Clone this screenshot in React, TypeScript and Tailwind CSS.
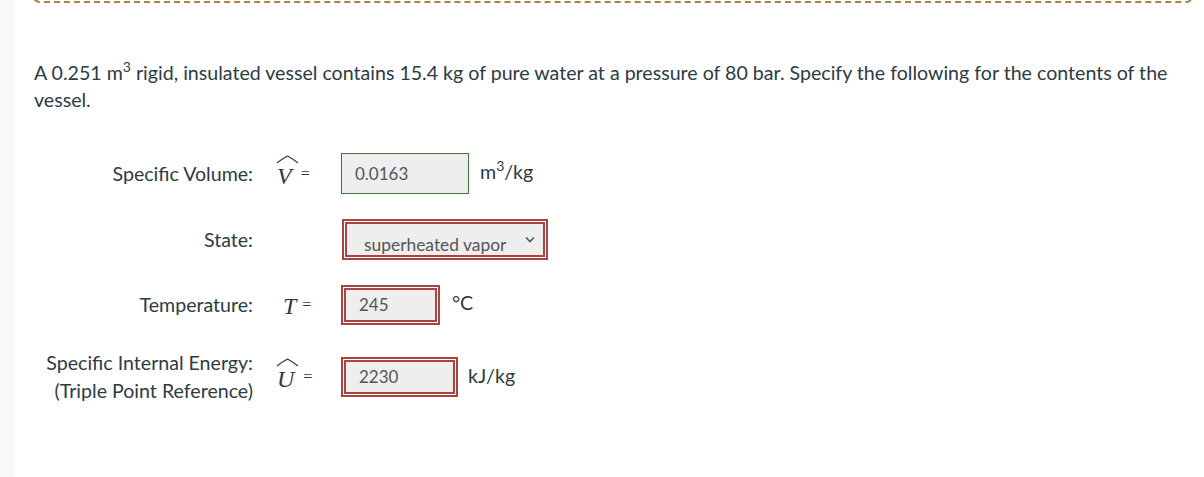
import React from "react";

const font = { fontFamily: "Lato, 'Open Sans', sans-serif" };
const serif = { fontFamily: "'Liberation Serif', 'DejaVu Serif', serif" };

function Hat({ letter }: { letter: string }) {
  return (
    <span className="relative inline-block translate-y-[2px]" style={serif}>
      <svg className="absolute left-[-1px] top-[-3px]" width="23" height="9" viewBox="0 0 23 9">
        <path d="M1 8 Q6 4 11.5 1 Q17 4 22 8" fill="none" stroke="#2d3b45" strokeWidth="1.2" />
      </svg>
      <span className="italic">{letter}</span>
    </span>
  );
}

function RedBox({ w, h, children }: { w: string; h: string; children: React.ReactNode }) {
  return (
    <div className={`${w} ${h} border-2 border-[#a94442] bg-white p-px`}>
      <div className="w-full h-full border-2 border-[#a94442] bg-[#eeeeee] flex items-center pl-[13px] text-[17px] text-[#555555]">
        {children}
      </div>
    </div>
  );
}

export default function App() {
  return (
    <div className="flex h-[477px] w-[1204px] bg-white text-[#2d3b45] overflow-hidden" style={font}>
      <div className="w-[14px] shrink-0 bg-[#f8f8f8]" />
      <div className="flex-1 flex flex-col">
        <div className="ml-[18px] mr-[10px] -mt-[22px] h-[25px] border-2 border-dashed border-[#a58447] rounded-lg" />
        <p className="ml-[20px] mt-[56px] mr-[20px] text-[19.6px] leading-[27px]">
          A 0.251 m<sup className="text-[14px] -top-[8px]">3</sup> rigid, insulated vessel contains 15.4 kg of pure water at a pressure of 80 bar. Specify the following for the contents of the vessel.
        </p>

        <div className="flex items-center mt-[40px] h-[41px]">
          <div className="w-[239px] text-right text-[19.6px]">Specific Volume:</div>
          <div className="w-[62px] pl-[24px] text-[24px] flex items-center gap-[9px]">
            <Hat letter="V" />
            <span className="text-[16px]" style={serif}>=</span>
          </div>
          <div className="ml-[26px] w-[128px] h-[41px] border border-[#3c763d] bg-[#eeeeee] flex items-center pl-[13px] text-[17px] text-[#555555]">
            0.0163
          </div>
          <div className="ml-[11px] -mt-[4px] text-[19.6px]">
            m<sup className="text-[14px] -top-[8px]">3</sup>/kg
          </div>
        </div>

        <div className="flex items-center mt-[25px] h-[41px]">
          <div className="w-[239px] text-right text-[19.6px]">State:</div>
          <div className="w-[62px]" />
          <div className="ml-[27px] w-[206px] h-[41px] border-2 border-[#a94442] bg-white p-px">
            <div className="w-full h-full border-2 border-[#a94442] bg-[#eeeeee] relative overflow-hidden">
              <span className="absolute left-[17px] top-[11px] text-[17.4px] text-[#555555] leading-[20px] whitespace-nowrap">superheated vapor</span>
              <svg className="absolute right-[8px] top-[12px]" width="10" height="7" viewBox="0 0 10 7">
                <path d="M1 1.5 L5 5.5 L9 1.5" fill="none" stroke="#555" strokeWidth="1.6" />
              </svg>
            </div>
          </div>
        </div>

        <div className="flex items-center mt-[25px] h-[40px]">
          <div className="w-[239px] text-right text-[19.6px]">Temperature:</div>
          <div className="w-[62px] pl-[30px] flex items-center gap-[6px]" style={serif}>
            <span className="italic text-[24px] translate-y-[1px]">T</span>
            <span className="text-[16px]">=</span>
          </div>
          <div className="ml-[26px]">
            <RedBox w="w-[99px]" h="h-[40px]">245</RedBox>
          </div>
          <div className="ml-[12px] -mt-[4px] text-[19.6px]">°C</div>
        </div>

        <div className="flex items-center mt-[32px] h-[40px]">
          <div className="w-[239px] text-right text-[19.6px] leading-[28px]">
            Specific Internal Energy:
            <br />
            (Triple Point Reference)
          </div>
          <div className="w-[62px] pl-[24px] text-[24px] flex items-center gap-[9px]">
            <Hat letter="U" />
            <span className="text-[16px]" style={serif}>=</span>
          </div>
          <div className="ml-[26px]">
            <RedBox w="w-[117px]" h="h-[40px]">2230</RedBox>
          </div>
          <div className="ml-[10px] -mt-[2px] text-[19.6px]">kJ/kg</div>
        </div>
      </div>
    </div>
  );
}
